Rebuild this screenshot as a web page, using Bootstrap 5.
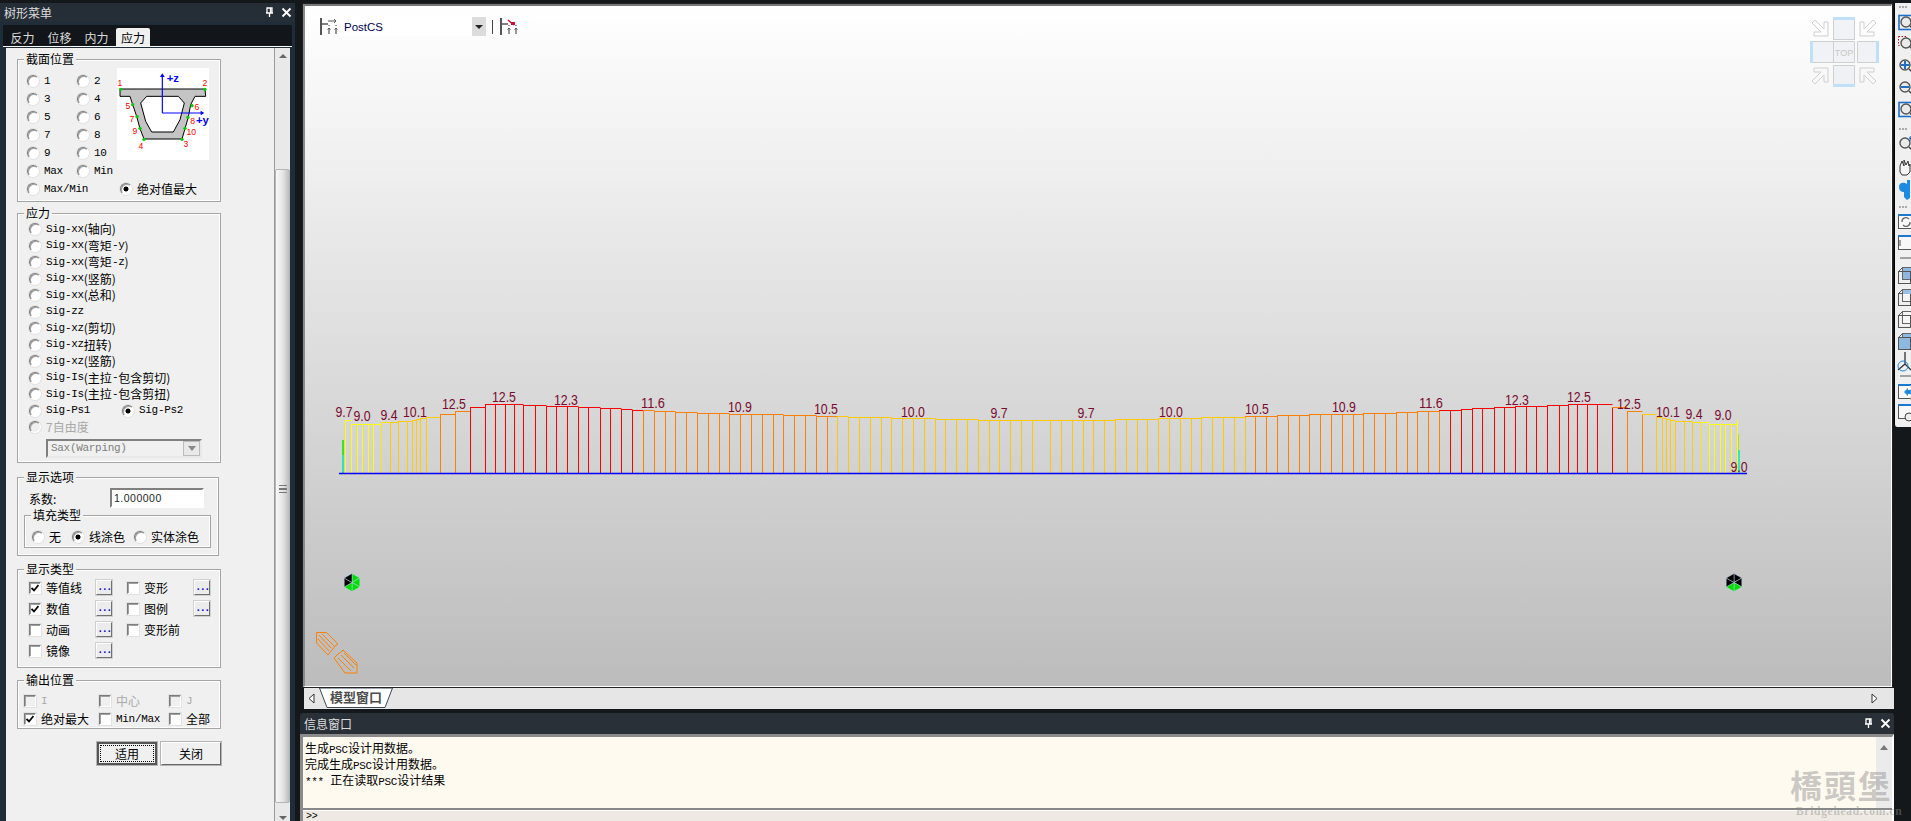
<!DOCTYPE html>
<html lang="zh">
<head>
    <meta charset="utf-8">
    <title>Post processing</title>
    <link rel="stylesheet" href="https://cdn.jsdelivr.net/npm/bootstrap@5.3.0/dist/css/bootstrap.min.css">
    <style>
        /* Global styles */
        html, body { width: 1911px; height: 821px; overflow: hidden; }
        body {
            font-family: "Noto Sans CJK SC", "Liberation Sans", sans-serif;
            font-size: 12px;
            line-height: 1;
            color: #000;
            background-color: #14181b;
        }
        .lat { font-family: "Liberation Mono", monospace; font-size: 11px; letter-spacing: -.3px; line-height: 1; }

        /* Left tree pane */
        .tree-pane { width: 295px; height: 821px; flex: none; background-color: #1f2d3a; }
        .title-bar { height: 22px; background-color: #252d36; color: #dcdcdc; border-top: 3px solid #14181b; padding: 0 3px 0 4px; }
        .ctl-icons { gap: 6px; }
        .tree-tabs { height: 22px; margin: 3px 3px 0 3px; background-color: #12161a; padding: 3px 0 0 1px; border-bottom: 1px solid #fff; }
        .tree-tabs .nav-link { color: #dcdcdc; padding: 4px 0 0; height: 18px; width: 37px; text-align: center; border-radius: 2px 2px 0 0; }
        .tree-tabs .nav-link.active { background-color: #f0f0f0; color: #000; width: 34px; margin-left: 1px; }
        .pane-body { height: 775px; margin: 1px 5px 0 6px; background-color: #f0f0f0; }
        .form-col { width: 268px; padding: 11px 0 0 11px; flex: none; }

        /* Group box */
        .grp { position: relative; width: 204px; border: 1px solid #a5a5a5; box-shadow: 0 0 0 1px #fff inset; }
        .grp-title { position: absolute; top: -7px; left: 6px; padding: 0 2px; background-color: #f0f0f0; }
        .grp-section { height: 143px; padding: 12px 0 0 9px; margin-bottom: 11px; }
        .grp-stress { height: 250px; padding: 7px 0 0 11px; margin-bottom: 14px; }
        .grp-options { width: 202px; height: 79px; margin-bottom: 13px; }
        .grp-fill { position: absolute; left: 6px; top: 37px; width: 187px; height: 33px; padding-top: 11px; }
        .grp-type { height: 99px; padding: 7px 0 0 11px; margin-bottom: 12px; }
        .grp-out { height: 49px; padding: 11px 0 0 6px; }

        .section-grid { display: grid; grid-template-columns: 50px 40px 1fr; grid-auto-rows: 18px; }
        .section-pic { grid-column: 3; grid-row: 1 / 6; width: 92px; height: 92px; margin-top: -4px; background: #fff; }
        .rw { display: flex; align-items: center; }
        .rw-stress { height: 16.500px; }
        .rw-type { height: 21px; }
        .rw-out { height: 18px; }
        .sp-93 { width: 93px; }

        /* Classic radio and checkbox */
        .rb, .cb { appearance: none; -webkit-appearance: none; margin: 0 5px 0 0; flex: none; background-color: #fff; border: 1px solid; border-color: #7c7c7c #fff #fff #7c7c7c; box-shadow: inset 1px 1px 0 #a0a0a0, 0 0 0 1px #e2e2e2; }
        .rb { width: 12px; height: 12px; border-radius: 50%; }
        .rb:checked { background-image: radial-gradient(circle, #000 2.200px, #fff 2.800px); }
        .cb { width: 12px; height: 12px; }
        .cb-wrap { position: relative; display: inline-flex; }
        .cb-wrap svg { position: absolute; left: 2px; top: 2px; }
        .dim { color: #a9a9a9; }
        .rb:disabled, .cb:disabled { background-color: #f0f0f0; }

        .sax-select { width: 156px; height: 19px; margin: 3px 0 0 17px; border: 2px solid; border-color: #808080 #e8e8e8 #e8e8e8 #808080; color: #808080; padding-left: 3px; }
        .sax-arrow { width: 17px; height: 15px; background: #e8e8e8; border: 1px solid #bbb; }
        .coef-input.form-control { position: absolute; left: 92px; top: 10px; width: 94px; height: 20px; padding: 0 0 0 2px; font: 10.500px "Liberation Sans", sans-serif; letter-spacing: .5px; border: 2px solid; border-color: #808080 #fff #fff #808080; border-radius: 0; background: #fff; }
        .coef-label { position: absolute; left: 11px; top: 15px; }
        .dots-btn { width: 16px; height: 15px; background: #ececec; border: 1px solid; border-color: #fff #707070 #707070 #fff; box-shadow: 0 0 0 1px #d0d0d0; color: #0000c8; font: bold 10px/13px "Liberation Mono", monospace; letter-spacing: -1.500px; text-align: center; flex: none; }
        .win-btn.btn { height: 23px; width: 60px; padding: 0; font-size: 12px; line-height: 1; border-radius: 0; background: #f0f0f0; color: #000; border: 1px solid; border-color: #fff #696969 #696969 #fff; box-shadow: 0 0 0 1px #b4b4b4; }
        .win-btn.def { border: 2px solid #555; outline: 1px dotted #000; outline-offset: -4px; }

        /* Panel scrollbar */
        .pane-scroll { width: 16px; flex: none; background: #e9e9e9; border-left: 1px solid #9a9a9a; position: relative; }
        .scroll-thumb { position: absolute; left: 0; right: 0; top: 121px; height: 634px; background: linear-gradient(90deg, #f8f8f8, #e6e6e6 50%, #bdbdbd); border: 1px solid #b5b5b5; border-radius: 2px; }
        .scroll-up, .scroll-down { position: absolute; left: 4px; width: 0; height: 0; border-left: 4px solid transparent; border-right: 4px solid transparent; }
        .scroll-up { top: 6px; border-bottom: 4px solid #666; }
        .scroll-down { bottom: 3px; border-top: 4px solid #666; }
        .scroll-grip { position: absolute; left: 3px; top: 315px; width: 8px; height: 8px; border-top: 1px solid #777; border-bottom: 1px solid #777; }
        .scroll-grip::after { content: ""; display: block; margin-top: 2px; height: 2px; border-top: 1px solid #777; border-bottom: 1px solid #777; }

        /* Work area */
        .work { width: 1594px; margin-left: 5px; flex: none; }
        .view-frame { height: 687px; padding: 4px 2px 0 3px; }
        .view-canvas { position: relative; height: 683px; border: 1px solid #fff; border-top: 2px solid #777; border-left: 2px solid #8a8a8a; outline: 1px solid #222; background: linear-gradient(#fff, #bcbcbc); }
        .view-canvas svg { display: block; }
        .cs-box { position: absolute; left: 36px; top: 11px; width: 145px; height: 19px; background: #fff; padding: 4px 0 0 3px; font: 11.500px "Liberation Sans", sans-serif; color: #000050; }
        .cs-arrow { position: absolute; right: 0; top: 0; width: 14px; height: 19px; background: #dcdcdc; }
        .cs-arrow::after { content: ""; position: absolute; left: 3px; top: 8px; border-left: 4px solid transparent; border-right: 4px solid transparent; border-top: 4px solid #222; }

        .model-tabs { height: 21px; margin: 1px 0 0 4px; background: #e6e6e6; position: relative; }
        .model-tab { position: absolute; left: 15px; top: 0; width: 74px; height: 20px; color: #4d4d4d; font-weight: 700; font-size: 13px; text-align: center; padding-top: 2px; }
        .model-tab svg { position: absolute; left: 0; top: 0; }
        .model-tab span { position: relative; }
        .tab-edge { position: absolute; top: 5px; }

        .info-title { height: 21px; margin-top: 4px; background: #2a3038; color: #dcdcdc; border-radius: 3px 3px 0 0; padding: 0 3px 0 4px; }
        .info-body { position: relative; height: 88px; border-top: 3px solid #8b8b8b; border-left: 3px solid #8b8b8b; border-right: 2px solid #fff; background: #fffaf0; }
        .info-log { height: 71px; padding: 3px 0 0 2px; }
        .info-log div { height: 16px; line-height: 16px; }
        .info-cmd { height: 14px; border-top: 2px solid #888; background: #eeeae3; padding: 0 0 0 3px; box-shadow: inset 0 1px 0 #fff; font-size: 10px; line-height: 10px; }
        .info-cmd .lat { font-size: 10px; }
        .info-scroll { position: absolute; right: 0; top: 0; width: 16px; height: 71px; background: #ebebeb; }
        .watermark { position: absolute; left: 1790px; top: 766px; width: 121px; color: rgba(140,140,140,.45); pointer-events: none; }
        .wm-big { font: 700 32px/36px "Noto Sans CJK TC", serif; letter-spacing: 2px; }
        .wm-small { font: 700 11.500px/12px "Liberation Serif", serif; letter-spacing: .7px; margin: 3px 0 0 6px; white-space: nowrap; }

        /* Right toolbar */
        .side-tools { width: 17px; margin: 3px 0 0 0; height: 424px; background: #f0f0f0; border-left: 1px solid #000; flex: none; border-radius: 0 0 0 3px; }
    </style>
</head>
<body>
    <svg width="0" height="0" class="position-absolute">
        <symbol id="pin" viewBox="0 0 11 11"><path d="M3 1h5v5H3zM2 6h7M5.500 6v4M6.500 1v5" fill="none" stroke="#fff" stroke-width="1.300"/></symbol>
        <symbol id="cross" viewBox="0 0 11 11"><path d="M1.500 1.500l8 8M9.500 1.500l-8 8" fill="none" stroke="#fff" stroke-width="1.800"/></symbol>
        <symbol id="tick" viewBox="0 0 8 8"><path d="M.5 4l2.500 2.500L7.500 1" fill="none" stroke="#000" stroke-width="1.800"/></symbol>
    </svg>

    <div class="d-flex">
        <!-- Tree pane -->
        <div class="tree-pane">
            <div class="title-bar d-flex align-items-center justify-content-between">
                <span>树形菜单</span>
                <span class="d-flex ctl-icons">
                    <svg width="11" height="11"><use href="#pin"/></svg>
                    <svg width="11" height="11"><use href="#cross"/></svg>
                </span>
            </div>
            <ul class="nav tree-tabs">
                <li class="nav-item"><a class="nav-link" href="#">反力</a></li>
                <li class="nav-item"><a class="nav-link" href="#">位移</a></li>
                <li class="nav-item"><a class="nav-link" href="#">内力</a></li>
                <li class="nav-item"><a class="nav-link active" href="#">应力</a></li>
            </ul>
            <div class="pane-body d-flex">
                <div class="form-col">
                    <!-- Section position -->
                    <div class="grp grp-section">
                        <span class="grp-title">截面位置</span>
                        <div class="section-grid">
                            <label class="rw"><input class="rb" type="radio" name="p"><span class="lat">1</span></label>
                            <label class="rw"><input class="rb" type="radio" name="p"><span class="lat">2</span></label>
                            <svg class="section-pic" viewBox="351 205 276 276">
                                <path d="M360 268H615L617 290H585L572 315 565 352 555 387 546 418H432L420 387 410 350 398 315 390 290H360Z" fill="#c4c4c4" stroke="#000" stroke-width="3"/>
                                <path d="M440 290H535L553 310 540 360 520 397H455L437 365 422 310Z" fill="#fff" stroke="#000" stroke-width="3"/>
                                <path d="M487 340V228M487 340H608" stroke="#00f" stroke-width="3.500" fill="none"/>
                                <path d="M480 232L487 221 494 232ZM602 333L613 340 602 347Z" fill="#00f"/>
                                <g fill="#00f" font-family="Liberation Sans" font-weight="700" font-size="34">
                                    <text x="500" y="246">+z</text>
                                    <text x="588" y="374">+y</text>
                                </g>
                                <g fill="#f00" font-family="Liberation Sans" font-size="26" text-anchor="middle">
                                    <text x="360" y="260">1</text><text x="615" y="260">2</text>
                                    <text x="558" y="443">3</text><text x="423" y="447">4</text>
                                    <text x="384" y="328">5</text><text x="591" y="332">6</text>
                                    <text x="396" y="366">7</text><text x="578" y="372">8</text>
                                    <text x="405" y="402">9</text><text x="574" y="405">10</text>
                                </g>
                                <g fill="#0c0">
                                    <circle cx="362" cy="269" r="5"/><circle cx="615" cy="269" r="5"/>
                                    <circle cx="398" cy="315" r="5"/><circle cx="576" cy="318" r="5"/>
                                    <circle cx="411" cy="351" r="5"/><circle cx="564" cy="353" r="5"/>
                                    <circle cx="420" cy="386" r="5"/><circle cx="555" cy="386" r="5"/>
                                    <circle cx="432" cy="419" r="5"/><circle cx="546" cy="419" r="5"/>
                                </g>
                            </svg>
                            <label class="rw"><input class="rb" type="radio" name="p"><span class="lat">3</span></label>
                            <label class="rw"><input class="rb" type="radio" name="p"><span class="lat">4</span></label>
                            <label class="rw"><input class="rb" type="radio" name="p"><span class="lat">5</span></label>
                            <label class="rw"><input class="rb" type="radio" name="p"><span class="lat">6</span></label>
                            <label class="rw"><input class="rb" type="radio" name="p"><span class="lat">7</span></label>
                            <label class="rw"><input class="rb" type="radio" name="p"><span class="lat">8</span></label>
                            <label class="rw"><input class="rb" type="radio" name="p"><span class="lat">9</span></label>
                            <label class="rw"><input class="rb" type="radio" name="p"><span class="lat">10</span></label>
                            <label class="rw"><input class="rb" type="radio" name="p"><span class="lat">Max</span></label>
                            <label class="rw"><input class="rb" type="radio" name="p"><span class="lat">Min</span></label>
                            <div class="rw" style="grid-column:1 / -1">
                                <label class="rw sp-93"><input class="rb" type="radio" name="p"><span class="lat">Max/Min</span></label>
                                <label class="rw"><input class="rb" type="radio" name="p" checked>绝对值最大</label>
                            </div>
                        </div>
                    </div>

                    <!-- Stress component -->
                    <div class="grp grp-stress">
                        <span class="grp-title">应力</span>
                        <label class="rw rw-stress"><input class="rb" type="radio" name="s"><span class="lat">Sig-xx</span>(轴向)</label>
                        <label class="rw rw-stress"><input class="rb" type="radio" name="s"><span class="lat">Sig-xx</span>(弯矩<span class="lat">-y</span>)</label>
                        <label class="rw rw-stress"><input class="rb" type="radio" name="s"><span class="lat">Sig-xx</span>(弯矩<span class="lat">-z</span>)</label>
                        <label class="rw rw-stress"><input class="rb" type="radio" name="s"><span class="lat">Sig-xx</span>(竖筋)</label>
                        <label class="rw rw-stress"><input class="rb" type="radio" name="s"><span class="lat">Sig-xx</span>(总和)</label>
                        <label class="rw rw-stress"><input class="rb" type="radio" name="s"><span class="lat">Sig-zz</span></label>
                        <label class="rw rw-stress"><input class="rb" type="radio" name="s"><span class="lat">Sig-xz</span>(剪切)</label>
                        <label class="rw rw-stress"><input class="rb" type="radio" name="s"><span class="lat">Sig-xz</span>扭转)</label>
                        <label class="rw rw-stress"><input class="rb" type="radio" name="s"><span class="lat">Sig-xz</span>(竖筋)</label>
                        <label class="rw rw-stress"><input class="rb" type="radio" name="s"><span class="lat">Sig-Is</span>(主拉<span class="lat">-</span>包含剪切)</label>
                        <label class="rw rw-stress"><input class="rb" type="radio" name="s"><span class="lat">Sig-Is</span>(主拉<span class="lat">-</span>包含剪扭)</label>
                        <div class="rw rw-stress">
                            <label class="rw sp-93"><input class="rb" type="radio" name="s"><span class="lat">Sig-Ps1</span></label>
                            <label class="rw"><input class="rb" type="radio" name="s" checked><span class="lat">Sig-Ps2</span></label>
                        </div>
                        <label class="rw rw-stress dim"><input class="rb" type="radio" name="s" disabled>7自由度</label>
                        <div class="sax-select d-flex align-items-center justify-content-between">
                            <span class="lat">Sax(Warping)</span>
                            <span class="sax-arrow d-flex align-items-center justify-content-center">
                                <svg width="8" height="5"><path d="M0 0h8L4 5z" fill="#888"/></svg>
                            </span>
                        </div>
                    </div>

                    <!-- Display options -->
                    <div class="grp grp-options">
                        <span class="grp-title">显示选项</span>
                        <span class="coef-label">系数:</span>
                        <input class="coef-input form-control" type="text" value="1.000000">
                        <div class="grp grp-fill d-flex">
                            <span class="grp-title">填充类型</span>
                            <label class="rw" style="margin-left:7px;width:40px"><input class="rb" type="radio" name="f">无</label>
                            <label class="rw" style="width:62px"><input class="rb" type="radio" name="f" checked>线涂色</label>
                            <label class="rw"><input class="rb" type="radio" name="f">实体涂色</label>
                        </div>
                    </div>

                    <!-- Display type -->
                    <div class="grp grp-type">
                        <span class="grp-title">显示类型</span>
                        <div class="rw rw-type">
                            <label class="rw" style="width:67px"><span class="cb-wrap"><input class="cb" type="checkbox" checked><svg width="8" height="8"><use href="#tick"/></svg></span>等值线</label>
                            <span class="dots-btn">...</span>
                            <label class="rw" style="margin-left:15px;width:67px"><input class="cb" type="checkbox">变形</label>
                            <span class="dots-btn">...</span>
                        </div>
                        <div class="rw rw-type">
                            <label class="rw" style="width:67px"><span class="cb-wrap"><input class="cb" type="checkbox" checked><svg width="8" height="8"><use href="#tick"/></svg></span>数值</label>
                            <span class="dots-btn">...</span>
                            <label class="rw" style="margin-left:15px;width:67px"><input class="cb" type="checkbox">图例</label>
                            <span class="dots-btn">...</span>
                        </div>
                        <div class="rw rw-type">
                            <label class="rw" style="width:67px"><input class="cb" type="checkbox">动画</label>
                            <span class="dots-btn">...</span>
                            <label class="rw" style="margin-left:15px"><input class="cb" type="checkbox">变形前</label>
                        </div>
                        <div class="rw rw-type">
                            <label class="rw" style="width:67px"><input class="cb" type="checkbox">镜像</label>
                            <span class="dots-btn">...</span>
                        </div>
                    </div>

                    <!-- Output position -->
                    <div class="grp grp-out">
                        <span class="grp-title">输出位置</span>
                        <div class="rw rw-out dim">
                            <label class="rw" style="width:75px"><input class="cb" type="checkbox" disabled><span class="lat">I</span></label>
                            <label class="rw" style="width:70px"><input class="cb" type="checkbox" disabled>中心</label>
                            <label class="rw"><input class="cb" type="checkbox" disabled><span class="lat">J</span></label>
                        </div>
                        <div class="rw rw-out">
                            <label class="rw" style="width:75px"><span class="cb-wrap"><input class="cb" type="checkbox" checked><svg width="8" height="8"><use href="#tick"/></svg></span>绝对最大</label>
                            <label class="rw" style="width:70px"><input class="cb" type="checkbox"><span class="lat">Min/Max</span></label>
                            <label class="rw"><input class="cb" type="checkbox">全部</label>
                        </div>
                    </div>

                    <div class="d-flex gap-1" style="margin:13px 0 0 80px">
                        <button class="btn win-btn def" type="button">适用</button>
                        <button class="btn win-btn" type="button">关闭</button>
                    </div>
                </div>
                <div class="pane-scroll ms-auto">
                    <span class="scroll-up"></span>
                    <div class="scroll-thumb"><span class="scroll-grip"></span></div>
                    <span class="scroll-down"></span>
                </div>
            </div>
        </div>

        <!-- Work area -->
        <div class="work">
            <div class="view-frame">
                <div class="view-canvas">
                    <svg id="plot" width="1586" height="680" viewBox="304 6 1586 680"></svg>
                    <div class="cs-box">PostCS<span class="cs-arrow"></span></div>
                </div>
            </div>
            <div class="model-tabs">
                <svg class="tab-edge" style="left:4px" width="7" height="11"><path d="M6 1L1 5.500 6 10z" fill="#fff" stroke="#333"/></svg>
                <div class="model-tab">
                    <svg width="74" height="20"><path d="M.5 0L8 19.500H66L73.500 0Z" fill="#fff" stroke="#3c4a5c"/></svg>
                    <span>模型窗口</span>
                </div>
                <svg class="tab-edge" style="right:16px" width="7" height="11"><path d="M1 1l5 4.500L1 10z" fill="#fff" stroke="#333"/></svg>
            </div>
            <div class="info-title d-flex align-items-center justify-content-between">
                <span>信息窗口</span>
                <span class="d-flex ctl-icons">
                    <svg width="11" height="11"><use href="#pin"/></svg>
                    <svg width="11" height="11"><use href="#cross"/></svg>
                </span>
            </div>
            <div class="info-body">
                <div class="info-log">
                    <div>生成<span class="lat">PSC</span>设计用数据。</div>
                    <div>完成生成<span class="lat">PSC</span>设计用数据。</div>
                    <div><span class="lat">*** </span>正在读取<span class="lat">PSC</span>设计结果</div>
                </div>
                <div class="info-cmd"><span class="lat">&gt;&gt;</span></div>
                <div class="info-scroll">
                    <svg class="d-block mx-auto mt-2" width="8" height="5"><path d="M4 0l4 5H0z" fill="#777"/></svg>
                </div>
            </div>
        </div>

        <!-- Right toolbar -->
        <div class="side-tools">
            <svg id="tools" class="d-block" width="16" height="424" viewBox="0 3 16 424"></svg>
        </div>
    </div>

    <div class="watermark">
        <div class="wm-big">橋頭堡</div>
        <div class="wm-small">Bridgehead.com.cn</div>
    </div>

    <script>
        var NS = "http://www.w3.org/2000/svg";

        function add(parent, tag, attrs, text) {
            var el = document.createElementNS(NS, tag);
            for (var key in attrs) {
                el.setAttribute(key, attrs[key]);
            }
            if (text) {
                el.textContent = text;
            }
            parent.appendChild(el);
            return el;
        }

        // Top of the diagram, left half, read off the reference (x, y)
        var curve = [[344,420],[347,424],[372,424],[380,422],[406,421],[425,417],[439,414],[454,411],[469,407],[484,404],[504,404],[545,405.5],[577,407],[620,409],[660,411],[700,413],[750,414],[800,415],[826,416],[860,417],[910,418],[950,419],[1000,420],[1040,420.5]];
        var BASE = 473, MID = 1040;

        function topAt(x) {
            if (x > MID) x = 2 * MID - x;
            for (var i = 1; i < curve.length; i++) {
                if (x <= curve[i][0]) {
                    var a = curve[i - 1], b = curve[i];
                    return a[1] + (b[1] - a[1]) * (x - a[0]) / (b[0] - a[0]);
                }
            }
            return curve[curve.length - 1][1];
        }

        function colorAt(x) {
            if (x > MID) x = 2 * MID - x;
            if (x <= 374) return "#ffff00";
            if (x <= 385) return "#ffe600";
            if (x <= 430) return "#ffcc00";
            if (x <= 458) return "#ff8000";
            if (x <= 632) return "#ff0000";
            if (x <= 828) return "#ff8000";
            return "#ffc800";
        }

        function drawPlot(svg) {
            // vertical line positions for the left half, the right half mirrors them
            var left = [344,350,356,361,367,372,380,389,397,406,411,415,419,425,439,454,469,484,494,504,513,522,534,545,555,566,577,587,599,609,620,631];
            for (var p = 642; p < MID; p += 10.8) left.push(Math.round(p));
            var xs = left.slice();
            left.slice().reverse().forEach(function (x) { xs.push(2 * MID - x); });

            add(svg, "line", { x1: 342, y1: 473, x2: 342, y2: 440, stroke: "#00e0c0", "stroke-width": 1.5 });
            add(svg, "line", { x1: 342, y1: 455, x2: 342, y2: 440, stroke: "#40e000", "stroke-width": 1.5 });
            add(svg, "line", { x1: 1738, y1: 473, x2: 1738, y2: 450, stroke: "#00e8c0", "stroke-width": 1.5 });
            add(svg, "line", { x1: 1737, y1: 450, x2: 1737, y2: 434, stroke: "#a0e000", "stroke-width": 1.5 });

            xs.forEach(function (x, i) {
                var y = Math.round(topAt(x));
                add(svg, "line", { x1: x + .5, y1: y, x2: x + .5, y2: BASE, stroke: colorAt(x), "stroke-width": 1 });
                if (i < xs.length - 1) {
                    var next = xs[i + 1];
                    add(svg, "line", { x1: x, y1: y + .5, x2: next + .5, y2: y + .5, stroke: colorAt(x < MID ? x : next), "stroke-width": 1 });
                }
            });
            add(svg, "line", { x1: 338, y1: 473.5, x2: 1746, y2: 473.5, stroke: "#0000ff", "stroke-width": 1.3 });

            var labels = [["9.7",343,417],["9.0",361,421],["9.4",388,420],["10.1",414,417],["12.5",453,409],["12.5",503,402],["12.3",565,405],["11.6",652,408],["10.9",739,412],["10.5",825,414],["10.0",912,417],["9.7",998,418],["9.7",1085,418],["10.0",1170,417],["10.5",1256,414],["10.9",1343,412],["11.6",1430,408],["12.3",1516,405],["12.5",1578,402],["12.5",1628,409],["10.1",1667,417],["9.4",1693,419],["9.0",1722,420],["9.0",1738,472]];
            labels.forEach(function (l) {
                // the labels in the picture are tall and narrow, so squeeze a 14px face a little
                var width = 14 * ((l[0].length - 1) * .556 + .278) * .88;
                add(svg, "text", { x: l[1], y: l[2], "text-anchor": "middle", fill: "#7a0a2e", "font-family": "Liberation Sans", "font-size": 14, textLength: width, lengthAdjust: "spacingAndGlyphs" }, l[0]);
            });

            drawSupport(svg, 351, 582.5, ["#0d0", "#0d0", "#0d0", "#0d0", "#000", "#000"]);
            drawSupport(svg, 1733, 582.5, ["#000", "#000", "#0d0", "#0d0", "#000", "#000"]);
            drawPencils(svg);
            drawCube(svg);
            drawCsIcons(svg);
        }

        // Support marker: a hexagon cut into six wedges, clockwise from the top
        function drawSupport(svg, cx, cy, colors) {
            for (var i = 0; i < 6; i++) {
                var a = -Math.PI / 2 + i * Math.PI / 3, b = a + Math.PI / 3, r = 9;
                var pts = cx + "," + cy + " " + (cx + r * Math.cos(a)) + "," + (cy + r * Math.sin(a)) + " " + (cx + r * Math.cos(b)) + "," + (cy + r * Math.sin(b));
                add(svg, "polygon", { points: pts, fill: colors[i], stroke: "#bcd4f0", "stroke-width": .5 });
            }
        }

        function drawPencils(svg) {
            var g = add(svg, "g", { fill: "none", stroke: "#ff8000", "stroke-width": 1 });
            add(g, "path", { d: "M315.500 632.500H325.500L337 644 334 646 332 649 330 651 327 655 315.500 643Z" });
            add(g, "path", { d: "M318 635L330 648M321 634L333 646M317 639L328 651" });
            add(g, "path", { d: "M333 658L335 656 337 654 340 652 342 650 356 663V673H344Z" });
            add(g, "path", { d: "M337 658L350 671M340 655L353 668M343 653L355 665" });
        }

        function drawCube(svg) {
            var g = add(svg, "g", { fill: "none", stroke: "#cfcfcf", "stroke-width": 1 });
            [[1832, 18], [1811, 41], [1832, 41], [1856, 41], [1832, 65]].forEach(function (b) {
                add(g, "rect", { x: b[0] + .5, y: b[1] + .5, width: 21, height: 21, fill: "rgba(235,238,242,.7)" });
            });
            add(svg, "rect", { x: 1832, y: 17, width: 22, height: 3, fill: "#bfe0f8" });
            add(svg, "rect", { x: 1809, y: 41, width: 3, height: 22, fill: "#bfe0f8" });
            add(svg, "rect", { x: 1875, y: 41, width: 3, height: 22, fill: "#bfe0f8" });
            add(svg, "rect", { x: 1832, y: 84, width: 22, height: 3, fill: "#bfe0f8" });
            add(svg, "text", { x: 1843, y: 56, "text-anchor": "middle", fill: "#c8c8c8", "font-family": "Liberation Sans", "font-size": 9 }, "TOP");
            var arrow = "16,16 2,16 2,12 9,12 0,3 3,0 12,9 12,2 16,2";
            [[1811, 20, 0], [1859, 20, 90], [1859, 68, 180], [1811, 68, 270]].forEach(function (a) {
                add(g, "polygon", { points: arrow, transform: "translate(" + a[0] + " " + a[1] + ") rotate(" + a[2] + " 8 8)" });
            });
        }

        // The two small coordinate system icons beside the PostCS box
        function drawCsIcons(svg) {
            [319, 499].forEach(function (x) {
                var g = add(svg, "g", { transform: "translate(" + x + " 18)", fill: "none", stroke: "#555", "stroke-width": 1.5 });
                add(g, "path", { d: "M1 0V17", "stroke-width": 2 });
                add(g, "path", { d: "M0 6H8" });
                add(g, "path", { d: "M9 16V10M16 16V10M9 8V7M16 8V7", "stroke-width": 1.2 });
                add(g, "path", { d: "M7.500 11.500L9 10 10.500 11.500M14.500 11.500L16 10 17.500 11.500", "stroke-width": 1 });
            });
            add(svg, "path", { d: "M327 21H335M333 19L335 21 333 23", fill: "none", stroke: "#555", "stroke-width": 1 });
            add(svg, "path", { d: "M507 20L513 25", stroke: "#d01030", "stroke-width": 1.5 });
            add(svg, "rect", { x: 510, y: 22, width: 4, height: 3, fill: "#d01030" });
            add(svg, "line", { x1: 491.500, y1: 20, x2: 491.500, y2: 34, stroke: "#444", "stroke-width": 1 });
        }

        function lens(g, cx, cy) {
            add(g, "circle", { cx: cx, cy: cy, r: 5, fill: "#eaeaea", stroke: "#555", "stroke-width": 1.4 });
            add(g, "line", { x1: cx + 4, y1: cy + 4, x2: cx + 7, y2: cy + 7, stroke: "#444", "stroke-width": 1.5 });
        }

        function box(g, y, topBlue) {
            add(g, "rect", { x: 3.500, y: y - 6.500, width: 16, height: 13, fill: "#f8f8f8", stroke: "#555" });
            if (topBlue) add(g, "rect", { x: 3, y: y - 8, width: 16, height: 2, fill: "#1e78d0" });
        }

        function cube(g, y, tint) {
            add(g, "rect", { x: 7.500, y: y - 8.500, width: 12, height: 12, fill: tint ? "#8fb8e0" : "#f4f4f4", stroke: "#666" });
            add(g, "rect", { x: 3.500, y: y - 4.500, width: 12, height: 12, fill: tint === 2 ? "#8fb8e0" : "none", stroke: "#555" });
            add(g, "path", { d: "M3.500 " + (y - 4.500) + "L7.500 " + (y - 8.500), stroke: "#555" });
        }

        function drawTools(svg) {
            // grip dots
            [6, 128, 206].forEach(function (y) {
                [4, 7, 10].forEach(function (x) {
                    add(svg, "rect", { x: x, y: y, width: 2, height: 2, fill: "#aaa" });
                });
            });
            add(svg, "rect", { x: 4, y: 15.500, width: 16, height: 14, fill: "none", stroke: "#1e6fc8", "stroke-width": 1.600 });
            lens(svg, 11, 22);
            add(svg, "rect", { x: 3.500, y: 36.500, width: 8, height: 9, fill: "none", stroke: "#c01010", "stroke-dasharray": "1.500 1.500" });
            lens(svg, 11, 43);
            lens(svg, 10, 65);
            add(svg, "path", { d: "M6 65H14M10 61V69", stroke: "#1e6fc8", "stroke-width": 2 });
            lens(svg, 10, 87);
            add(svg, "path", { d: "M6 87H14", stroke: "#1e6fc8", "stroke-width": 2 });
            add(svg, "rect", { x: 4, y: 102.500, width: 16, height: 14, fill: "none", stroke: "#1e6fc8", "stroke-width": 1.600 });
            lens(svg, 11, 109);
            lens(svg, 10, 143);
            add(svg, "path", { d: "M14 138h5M16 136v5", stroke: "#1e6fc8", "stroke-width": 1.500 });
            add(svg, "path", { d: "M5 172V166L7 161 9 166V160L11 165 13 161 14 166 15 164V172L12 175H7Z", fill: "#f4f4f4", stroke: "#333" });
            add(svg, "path", { d: "M4 187C4 182 9 182 12 184V180H15V198L12 200 9 197V192C6 192 4 190 4 187Z", fill: "#1e8ae0" });

            box(svg, 222, true);
            add(svg, "path", { d: "M7 222A4 4 0 0 1 14 219M15 222A4 4 0 0 1 8 225", fill: "none", stroke: "#666", "stroke-width": 1.300 });
            box(svg, 243, true);
            add(svg, "path", { d: "M5 240V246", stroke: "#444" });
            add(svg, "path", { d: "M5 258H16", stroke: "#555" });
            cube(svg, 276, 1);
            cube(svg, 298, 0);
            add(svg, "rect", { x: 8, y: 290, width: 11, height: 4, fill: "#9cc0e4" });
            cube(svg, 320, 0);
            cube(svg, 342, 2);
            add(svg, "path", { d: "M10 352V364M10 364L3 370M10 364L16 370", stroke: "#333", "stroke-width": 1.300, fill: "none" });
            add(svg, "circle", { cx: 8, cy: 366, r: 5, fill: "none", stroke: "#1e8ae0" });
            add(svg, "path", { d: "M5 376H16", stroke: "#555" });
            box(svg, 392, true);
            add(svg, "path", { d: "M9 392l4-4v8z", fill: "#1e8ae0" });
            add(svg, "rect", { x: 13, y: 390, width: 5, height: 4, fill: "#1e8ae0" });
            box(svg, 412, true);
            add(svg, "circle", { cx: 14, cy: 417, r: 4, fill: "#eee", stroke: "#444" });
        }

        drawPlot(document.getElementById("plot"));
        drawTools(document.getElementById("tools"));
    </script>
</body>
</html>
